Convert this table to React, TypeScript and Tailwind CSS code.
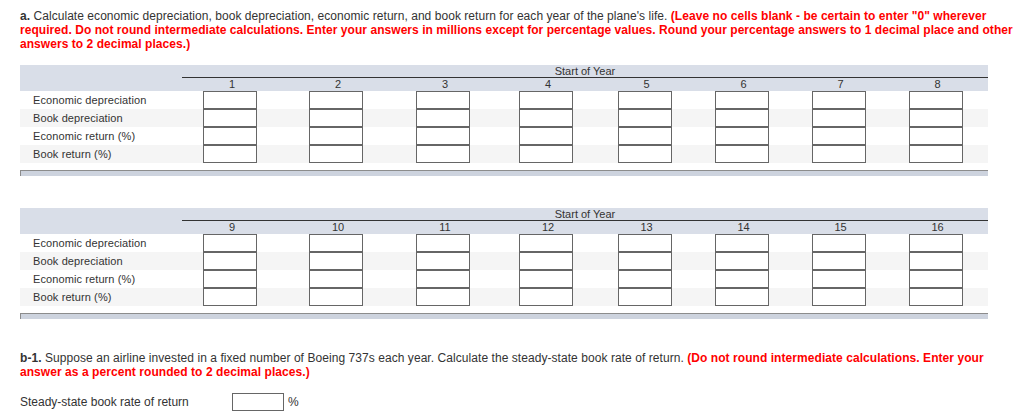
import React from 'react';

const rowLabels = [
  'Economic depreciation',
  'Book depreciation',
  'Economic return (%)',
  'Book return (%)',
];

// column template: label column + 8 year columns
const cols = 'grid grid-cols-[162px_104px_108px_106px_100px_97px_97px_97px_97px]';

function YearTable({ years }: { years: number[] }) {
  return (
    <div className="ml-[20px] w-[968px]">
      {/* header band */}
      <div className={`${cols} bg-[#d9dee8] h-[26px]`}>
        <div className="row-span-2" />
        <div className="col-span-8 h-[13px] border-b border-[#333] text-center text-[11px] leading-[12px] text-[#333]">
          Start of Year
        </div>
        {years.map((y) => (
          <div key={y} className="pr-[4px] text-center text-[11px] leading-[13px] text-[#333]">
            {y}
          </div>
        ))}
      </div>

      {/* rows */}
      {rowLabels.map((label, i) => (
        <div key={label} className={`${cols} h-[18px] ${i % 2 === 1 ? 'bg-[#f5f5f5]' : 'bg-white'}`}>
          <div className="pl-[13px] text-[11px] leading-[18px] tracking-[0.1px] text-[#333]">{label}</div>
          {years.map((y) => (
            <div key={y} className="flex justify-center pr-[8px]">
              <input type="text" className="w-[54px] h-[18px] border border-[#666] bg-white outline-none" />
            </div>
          ))}
        </div>
      ))}

      {/* bottom bar */}
      <div className="mt-[7px] h-[6px] bg-[#cdd3de] border-t border-l border-[#8c8c8c]" />
    </div>
  );
}

export default function App() {
  return (
    <div
      className="w-[1024px] h-[420px] bg-white overflow-hidden text-[#333]"
      style={{ fontFamily: '"Liberation Sans", Arial, Helvetica, sans-serif' }}
    >
      <p className="pt-[9px] px-[20px] text-[12px] leading-[14px] tracking-[0.05px] whitespace-nowrap">
        <b>a.</b> Calculate economic depreciation, book depreciation, economic return, and book return for each year of the plane's life.{' '}
        <b className="text-[#ff0000]">(Leave no cells blank - be certain to enter "0" wherever</b>
        <br />
        <b className="text-[#ff0000]">
          required. Do not round intermediate calculations. Enter your answers in millions except for percentage values. Round your percentage answers to 1 decimal place and other
        </b>
        <br />
        <b className="text-[#ff0000]">answers to 2 decimal places.)</b>
      </p>

      <div className="mt-[14px]">
        <YearTable years={[1, 2, 3, 4, 5, 6, 7, 8]} />
      </div>

      <div className="mt-[32px]">
        <YearTable years={[9, 10, 11, 12, 13, 14, 15, 16]} />
      </div>

      <p className="mt-[32px] px-[20px] text-[12px] leading-[14px] tracking-[0.06px] whitespace-nowrap">
        <b>b-1.</b> Suppose an airline invested in a fixed number of Boeing 737s each year. Calculate the steady-state book rate of return.{' '}
        <b className="text-[#ff0000]">(Do not round intermediate calculations. Enter your</b>
        <br />
        <b className="text-[#ff0000]">answer as a percent rounded to 2 decimal places.)</b>
      </p>

      <div className="mt-[14px] ml-[20px] flex items-center text-[12px]">
        <span className="w-[212px]">Steady-state book rate of return</span>
        <input type="text" className="w-[52px] h-[18px] border border-[#666] bg-white outline-none" />
        <span className="ml-[4px]">%</span>
      </div>
    </div>
  );
}
